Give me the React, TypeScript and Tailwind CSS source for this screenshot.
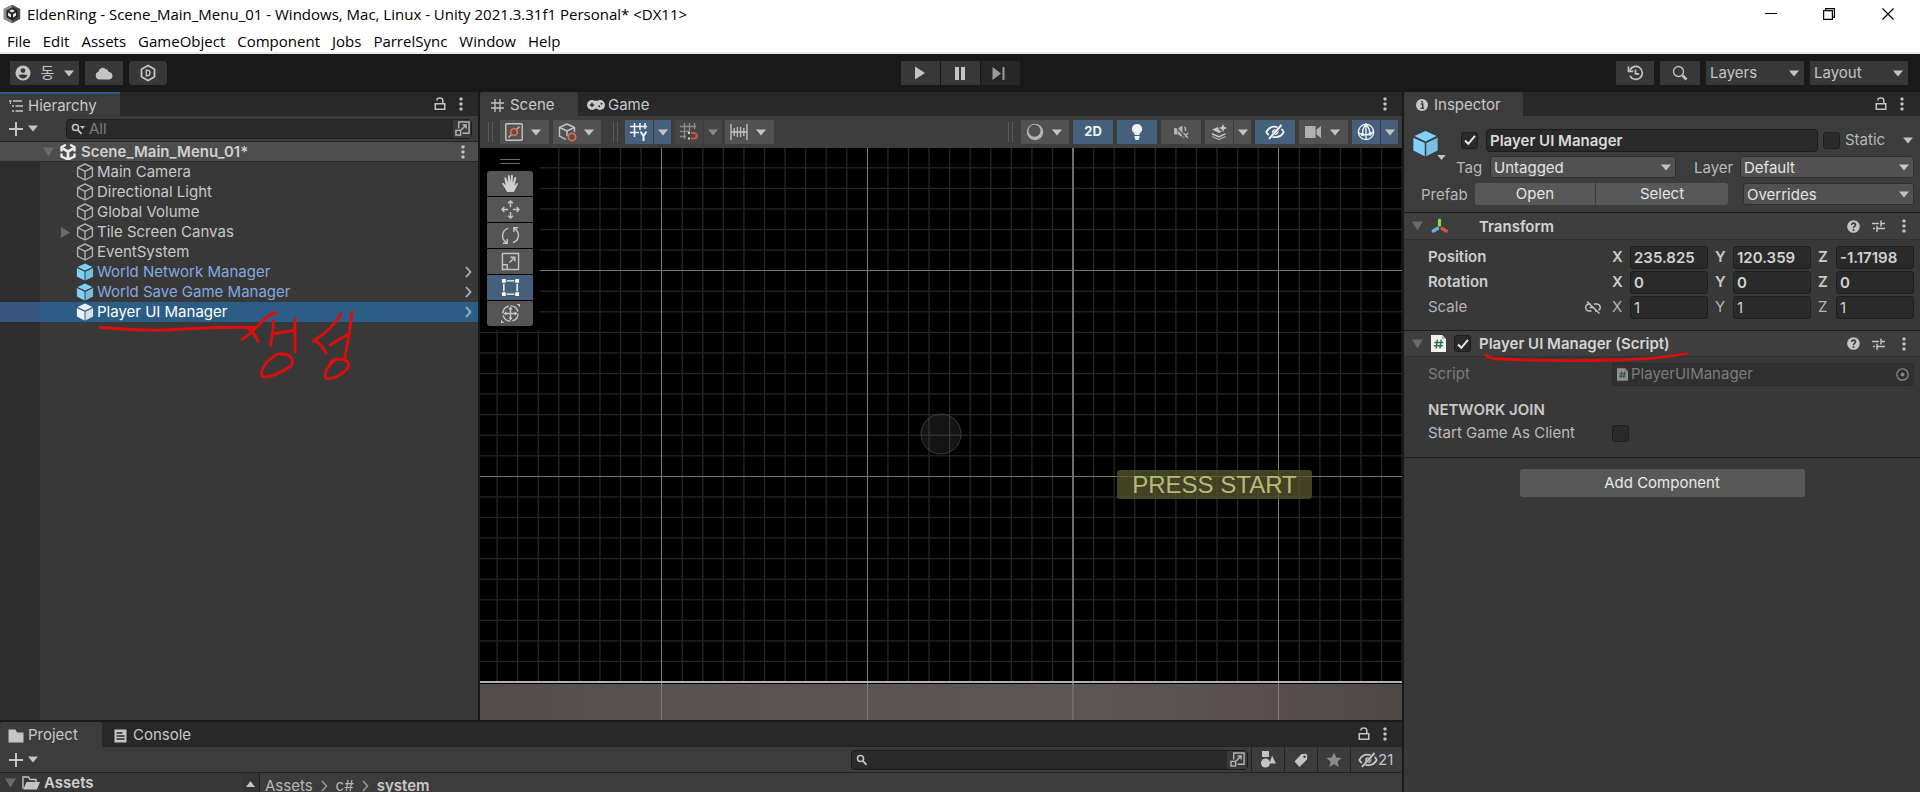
import React from "react";

type SvgProps = { className?: string };

/* ---------- small shared glyphs ---------- */

const Caret = ({ className = "text-[#c4c4c4]" }: SvgProps) => (
  <svg viewBox="0 0 10 7" className={`h-[7px] w-[10px] shrink-0 ${className}`} fill="currentColor" aria-hidden="true">
    <path d="M0 0.5h10L5 6.5z" />
  </svg>
);

const Foldout = ({ className = "text-[#6a6a6a]" }: SvgProps) => (
  <svg viewBox="0 0 11 10" className={`h-[10px] w-[11px] shrink-0 ${className}`} fill="currentColor" aria-hidden="true">
    <path d="M0 0.5h11L5.5 9.5z" />
  </svg>
);

const Dots = () => (
  <svg viewBox="0 0 4 14" className="h-[14px] w-1 shrink-0 text-[#c4c4c4]" fill="currentColor" aria-hidden="true">
    <rect x="0.5" y="0.5" width="3" height="3" rx="0.8" />
    <rect x="0.5" y="5.5" width="3" height="3" rx="0.8" />
    <rect x="0.5" y="10.5" width="3" height="3" rx="0.8" />
  </svg>
);

const Lock = () => (
  <svg viewBox="0 0 12 14" className="h-[14px] w-3 shrink-0 text-[#c4c4c4]" fill="none" stroke="currentColor" strokeWidth="1.5" aria-hidden="true">
    <rect x="1.25" y="6.75" width="9.5" height="5.5" />
    <path d="M3 3.5V2.8C3 1.6 4 1 5.8 1c2 0 3 .7 3 2.2v3.5" />
  </svg>
);

const Plus = () => (
  <svg viewBox="0 0 16 16" className="size-4 shrink-0 text-[#c4c4c4]" stroke="currentColor" strokeWidth="2" aria-hidden="true">
    <path d="M8 1v14M1 8h14" />
  </svg>
);

const Magnifier = ({ className = "size-[14px]" }: SvgProps) => (
  <svg viewBox="0 0 14 14" className={`shrink-0 text-[#c4c4c4] ${className}`} fill="none" stroke="currentColor" strokeWidth="1.6" aria-hidden="true">
    <circle cx="5.5" cy="5.5" r="3" />
    <path d="M7.8 7.8l3.700 4" strokeWidth="1.800" />
  </svg>
);

const Expand = ({ className = "size-[15px]" }: SvgProps) => (
  <svg viewBox="0 0 16 16" className={`shrink-0 text-[#b4b4b4] ${className}`} fill="none" stroke="currentColor" strokeWidth="1.5" aria-hidden="true">
    <path d="M4 8V1h11v12H8" />
    <rect x="1" y="10" width="5" height="5" />
    <path d="M6.5 9.5l5-5M8 4.2h3.8V8" />
  </svg>
);

const CubeOutline = () => (
  <svg viewBox="0 0 18 18" className="size-[18px] shrink-0 text-[#b0b0b0]" fill="none" stroke="currentColor" strokeWidth="1.4" strokeLinejoin="round" aria-hidden="true">
    <path d="M9 1l7.4 3.6v8.6L9 17l-7.4-3.8V4.6zM1.6 4.6L9 8.4l7.4-3.8M9 8.4V17" />
  </svg>
);

const CubeSolid = ({ className = "" }: SvgProps) => (
  <svg viewBox="0 0 18 18" className={`shrink-0 ${className}`} fill="currentColor" aria-hidden="true">
    <path d="M9 .6L16.4 4 9 7.6 1.6 4z" />
    <path d="M.9 5.1l7.6 3.6v8.8L.9 13.6z" />
    <path d="M17.1 5.1L9.5 8.7v8.8l7.6-3.9z" opacity=".88" />
  </svg>
);

const UnityLogo = () => (
  <svg viewBox="0 0 16 16" className="size-4 shrink-0" fill="none" aria-hidden="true">
    <path d="M5.8.8L1.5 3.2v4.2M10.2.8l4.3 2.4v4.2M1.500 9.500v3L8 15.500l6.500-3v-3" stroke="#ececec" strokeWidth="2.4" />
    <path d="M8 7.6V14M8 7.6L2.5 4.4M8 7.6l5.5-3.2" stroke="#ececec" strokeWidth="2.800" />
  </svg>
);

const ScriptIcon = ({ className = "" }: SvgProps) => (
  <svg viewBox="0 0 15 17" className={`shrink-0 ${className}`} aria-hidden="true">
    <path d="M0 0h11l4 4v13H0z" fill="#f2f2f2" />
    <path d="M11 0l4 4h-4z" fill="#b9b9b9" />
    <path d="M6.4 4.5l-1.3 9M10.3 4.5l-1.3 9M3.3 7.5h9M2.8 10.7h9" stroke="#2f7046" strokeWidth="1.4" fill="none" />
  </svg>
);

const EyeOff = ({ className = "" }: SvgProps) => (
  <svg viewBox="0 0 20 16" className={`h-4 w-5 shrink-0 ${className}`} fill="none" stroke="currentColor" strokeWidth="1.800" aria-hidden="true">
    <path d="M12.500 3.200C7 1.600 3.200 4.500 1.300 8c.6 1.200 1.500 2.300 2.700 3.100M16.500 4.800c1 .9 1.700 2 2.200 3.200-2 3.800-5.700 6-11.200 4.800" />
    <path d="M4 14.800L16.500 1" strokeWidth="2" />
    <path d="M7 9.500c-.6-2.300 1-4.500 3.800-4.300z" fill="currentColor" stroke="none" />
    <path d="M9.400 11l4-4.500c.6 2.300-1 4.700-4 4.500z" fill="currentColor" stroke="none" />
  </svg>
);

const Grip = () => (
  <span aria-hidden="true" className="h-5 w-[5px] shrink-0 border-x border-[#5a5a5a]" />
);

const PathChevron = () => (
  <svg viewBox="0 0 7 12" className="h-3 w-[7px]" fill="none" stroke="#999" strokeWidth="1.600" aria-hidden="true">
    <path d="M1 1l4.500 5L1 11" />
  </svg>
);

/* ---------- building blocks ---------- */

function CheckBox({ id, checked = false, label }: { id: string; checked?: boolean; label?: string }) {
  return (
    <span className="relative grid size-[17px] shrink-0 place-items-center">
      <input
        id={id}
        type="checkbox"
        defaultChecked={checked}
        aria-label={label}
        className="peer absolute inset-0 appearance-none rounded-[3px] border border-[#1e1e1e] bg-[#2a2a2a]"
      />
      <svg viewBox="0 0 14 12" className="pointer-events-none relative h-3 w-3.5 opacity-0 peer-checked:opacity-100" fill="none" stroke="#e8e8e8" strokeWidth="2" aria-hidden="true">
        <path d="M2 6.500l3.300 3.300L12 1.800" />
      </svg>
    </span>
  );
}

function DropDown({ id, value, className, selectClass }: { id: string; value: string; className: string; selectClass: string }) {
  return (
    <span className={`relative flex items-center ${className}`}>
      <select id={id} aria-label={value} className={`w-full appearance-none outline-none ${selectClass}`}>
        <option>{value}</option>
      </select>
      <span className="pointer-events-none absolute right-[5px]">
        <Caret />
      </span>
    </span>
  );
}

const topButton = "flex h-6 items-center justify-center bg-[#383838] text-[#c4c4c4]";

function TitleBar() {
  return (
    <header className="border-b-2 border-[#e9e9e9] bg-white font-['Open_Sans','Noto_Sans_CJK_KR',sans-serif] text-black">
      <div className="flex h-7 items-center">
        <svg viewBox="0 0 18 20" className="ml-[3px] h-5 w-[18px]" aria-hidden="true">
          <path d="M9 .8l8.200 4.300v9.800L9 19.200.8 14.900V5.100z" fill="#4a4a4a" />
          <path d="M9 .8L.8 5.100v9.800L9 19.200z" fill="#8e8e8e" />
          <path d="M9 3.600l5.600 3v6.700L9 16.400l-5.600-3.100V6.600z" fill="#262626" />
          <path d="M9 5.200l3 1.700-3 1.700-3-1.700zM5 8.600l3 1.700v3.200l-3-1.700zM13 8.600l-3 1.700v3.200l3-1.700z" fill="#e4e4e4" />
        </svg>
        <h1 className="ml-1.5 flex-1 text-[15px] whitespace-nowrap">
          EldenRing - Scene_Main_Menu_01 - Windows, Mac, Linux - Unity 2021.3.31f1 Personal* &lt;DX11&gt;
        </h1>
        <button aria-label="Minimize" className="grid h-7 w-[58px] place-items-center">
          <svg viewBox="0 0 12 12" className="size-3" stroke="#000"><path d="M0 5.500h12" /></svg>
        </button>
        <button aria-label="Restore" className="grid h-7 w-[58px] place-items-center">
          <svg viewBox="0 0 12 12" className="size-3" fill="none" stroke="#000" strokeWidth="1.200">
            <path d="M.6 2.600h8.800v8.800H.6zM2.600 2.600V.6h8.800v8.800h-2" />
          </svg>
        </button>
        <button aria-label="Close" className="mr-0.5 grid h-7 w-[60px] place-items-center">
          <svg viewBox="0 0 12 12" className="size-3" stroke="#000" strokeWidth="1.200"><path d="M.5.5l11 11M11.500.5l-11 11" /></svg>
        </button>
      </div>
      <nav className="flex h-6 items-start gap-3 pl-[7px] text-[15px]">
        {["File", "Edit", "Assets", "GameObject", "Component", "Jobs", "ParrelSync", "Window", "Help"].map((m) => (
          <button key={m} className="leading-[26px]">{m}</button>
        ))}
      </nav>
    </header>
  );
}

function MainToolbar() {
  return (
    <div className="grid h-[38px] grid-cols-[1fr_auto_1fr] items-center bg-[#191919]">
      <div className="flex items-center gap-1.5 pl-2.5">
        <button className={`${topButton} w-[69px] gap-2.5`}>
          <svg viewBox="0 0 16 16" className="size-4" aria-hidden="true">
            <circle cx="8" cy="8" r="7.500" fill="#c4c4c4" />
            <circle cx="8" cy="5.600" r="2.400" fill="#383838" />
            <path d="M3.600 10.200c2-1 6.800-1 8.800 0-.8 2.200-2.400 3.300-4.400 3.300s-3.600-1.100-4.400-3.300z" fill="#383838" />
          </svg>
          <span>동</span>
          <Caret />
        </button>
        <button aria-label="Cloud" className={`${topButton} w-[38px]`}>
          <svg viewBox="0 0 18 14" className="h-3.5 w-[18px]" fill="currentColor"><path d="M4.500 13.500a4 4 0 01-1-7.800A4.200 4.200 0 0111 3.300c1.400.2 2.500 1.200 2.700 2.800 2.200 0 3.800 1.600 3.800 3.700s-1.500 3.700-3.700 3.700z" /></svg>
        </button>
        <button aria-label="Version control" className={`${topButton} w-[38px] rounded-[3px]`}>
          <svg viewBox="0 0 16 18" className="h-[18px] w-4" fill="none" stroke="currentColor">
            <path d="M8 1.500l6.500 3.700v7.600L8 16.500l-6.500-3.700V5.200z" strokeWidth="1.800" />
            <path d="M6.300 6.200h1.200a2.500 2.800 0 010 5.600H6.300z" strokeWidth="1.400" />
          </svg>
        </button>
      </div>
      <div className="flex gap-px">
        <button aria-label="Play" className={`${topButton} w-[39px]`}>
          <svg viewBox="0 0 12 14" className="h-3.5 w-3" fill="currentColor"><path d="M1 .5L11 7 1 13.500z" /></svg>
        </button>
        <button aria-label="Pause" className={`${topButton} w-[39px]`}>
          <svg viewBox="0 0 10 13" className="h-[13px] w-2.5" fill="currentColor"><path d="M0 0h4v13H0zM6 0h4v13H6z" /></svg>
        </button>
        <button aria-label="Step" className="flex h-6 w-[39px] items-center justify-center bg-[#272727] pr-1 text-[#999]">
          <svg viewBox="0 0 13 13" className="size-[13px]" fill="currentColor"><path d="M.5 0l8.500 6.500L.5 13zM10.500 0h2v13h-2z" /></svg>
        </button>
      </div>
      <div className="flex items-center justify-end gap-1.5 pr-3">
        <button aria-label="Undo history" className={`${topButton} w-[38px]`}>
          <svg viewBox="0 0 17 16" className="h-4 w-[17px]" fill="none" stroke="currentColor" strokeWidth="1.700">
            <path d="M2.800 5.500A6.500 6.500 0 113 10.800" />
            <path d="M1.500 1.500v4.800h4.800" />
            <path d="M8.500 4.500v4.300h3.600" />
          </svg>
        </button>
        <button aria-label="Search" className={`${topButton} w-10`}>
          <svg viewBox="0 0 16 16" className="size-4" fill="none" stroke="currentColor">
            <circle cx="6.500" cy="6.500" r="5" strokeWidth="1.300" />
            <path d="M10.500 10.500l4 4" strokeWidth="2.600" />
          </svg>
        </button>
        <DropDown id="layers" value="Layers" className="w-[98px]" selectClass="h-6 bg-[#383838] pl-1 text-[#c4c4c4]" />
        <DropDown id="layout" value="Layout" className="w-[98px]" selectClass="h-6 bg-[#383838] pl-1 text-[#c4c4c4]" />
      </div>
    </div>
  );
}

const tree = [
  { name: "Main Camera", kind: "plain" },
  { name: "Directional Light", kind: "plain" },
  { name: "Global Volume", kind: "plain" },
  { name: "Tile Screen Canvas", kind: "plain", children: true },
  { name: "EventSystem", kind: "plain" },
  { name: "World Network Manager", kind: "prefab" },
  { name: "World Save Game Manager", kind: "prefab" },
  { name: "Player UI Manager", kind: "selected" },
];

function Hierarchy() {
  return (
    <section aria-label="Hierarchy" className="relative flex w-[478px] shrink-0 flex-col bg-[#383838]">
      <div className="flex h-6 items-stretch bg-[#282828]">
        <button className="flex w-[120px] items-center gap-[5px] border-t-2 border-[#2c5d87] bg-[#3c3c3c] pt-0.5 pl-[9px]">
          <svg viewBox="0 0 14 12" className="h-3 w-3.5" stroke="#c4c4c4" strokeWidth="1.500" aria-hidden="true">
            <path d="M0 1h2.500M4 1h9M3 6h2M6.500 6H14M3 11h2M6.500 11H14" />
            <path d="M1.500 1v3" strokeWidth="1" />
          </svg>
          Hierarchy
        </button>
        <div className="ml-auto flex items-center gap-[13px] pr-[15px]"><Lock /><Dots /></div>
      </div>
      <div className="flex h-[26px] items-center gap-1 border-b border-[#232323] bg-[#3c3c3c] pr-1.5 pl-2">
        <button aria-label="Create object" className="flex items-center gap-1"><Plus /><Caret /></button>
        <label className="ml-6 flex h-5 flex-1 items-center rounded-[4px] border border-[#1c1c1c] bg-[#2a2a2a] pl-[3px]">
          <Magnifier />
          <svg viewBox="0 0 5 3" className="-ml-1 mb-0.5 h-[3px] w-[5px]" fill="#c4c4c4" aria-hidden="true"><path d="M0 0h5L2.500 3z" /></svg>
          <input aria-label="Search hierarchy" placeholder="All" className="ml-1 min-w-0 flex-1 bg-transparent pt-0.5 text-[15px] outline-none placeholder:text-[#7c7c7c]" />
          <span className="grid h-full w-[18px] place-items-center bg-[#3a3a3a]"><Expand /></span>
        </label>
      </div>
      <div className="flex h-5 items-center border-b border-[#2b2b2b] bg-[#4d4d4d] pr-[13px] pl-[43px] font-semibold text-[#d0d0d0]">
        <Foldout />
        <span className="mr-[5px] ml-1.5"><UnityLogo /></span>
        <span className="flex-1 pt-0.5">Scene_Main_Menu_01*</span>
        <Dots />
      </div>
      <ul className="flex-1 bg-linear-to-r from-[#2d2d2d] from-[40px] to-[#383838] to-[40px]">
        {tree.map((n) => {
          const selected = n.kind === "selected";
          return (
            <li
              key={n.name}
              className={selected ? "bg-linear-to-r from-[#38557f] from-[40px] to-[#2c5d87] to-[40px]" : ""}
            >
              <button className="flex h-5 w-full items-center pr-1.5 pl-[61px]">
                <span className="w-[15px]">
                  {n.children && (
                    <svg viewBox="0 0 9 11" className="h-[11px] w-[9px]" fill="#6a6a6a" aria-hidden="true"><path d="M0 0l9 5.500L0 11z" /></svg>
                  )}
                </span>
                {n.kind === "plain" && <CubeOutline />}
                {n.kind === "prefab" && <CubeSolid className="size-[18px] text-[#7fd0f5]" />}
                {selected && <CubeSolid className="size-[18px] text-[#f0f2f5]" />}
                <span className={`ml-[3px] flex-1 text-left ${n.kind === "prefab" ? "text-[#85a8e0]" : selected ? "text-white" : "text-[#c8c8c8]"}`}>
                  {n.name}
                </span>
                {n.kind !== "plain" && (
                  <svg viewBox="0 0 7 12" className="h-3 w-[7px]" fill="none" stroke="#a8b4c0" strokeWidth="1.800" aria-hidden="true"><path d="M1 1l4.500 5L1 11" /></svg>
                )}
              </button>
            </li>
          );
        })}
      </ul>
      {/* pen marks laid over the list */}
      <svg viewBox="0 0 260 70" className="pointer-events-none absolute top-[218px] left-[95px] h-[70px] w-[260px]" fill="none" stroke="#e00c0c" strokeWidth="2.800" strokeLinecap="round" strokeLinejoin="round" aria-hidden="true">
        <path d="M5 17.500c26 2 52 3.500 76 2 25-1.500 52-3 78-2" />
        <path d="M181 2.500c-8 1.500-14 9-20 15-5 5.500-9 9-14 12M154 19c4 3 7 7 9 12.500" />
        <path d="M178 11c1 8-1 15-2.500 24M177 24l22-3.500M200 9v33" />
        <path d="M175 49c-6 5-10 13-8 17 5 3 18-3 29-10 4-7-1-12-9-12-6-.5-7 1-11 5" />
        <path d="M246 4c-7 12-16 20-28 27M219 30c5 3 9 7 12 13M235 35l17-10M257 2c-2 16-4 33-8 48" />
        <path d="M240 50c-7 5-12 14-9 18 6 2 16-3 21-9 4-6 0-10-8-10-6 0-8 2-9 5" />
      </svg>
    </section>
  );
}

const tool = "grid h-6 place-items-center bg-[#515151] text-[#c4c4c4]";
const toolOn = "grid h-6 place-items-center bg-[#46607c] text-[#eef3f8]";

function SceneToolbar() {
  return (
    <div className="flex h-8 items-center justify-between bg-[#3c3c3c] pr-1 pl-2">
      <div className="flex items-center">
        <Grip />
        <button aria-label="Pivot" className="ml-[7px] flex h-6 w-[49px] items-center justify-between bg-[#515151] pr-2 pl-[5px]">
          <svg viewBox="0 0 18 18" className="size-[18px]" fill="none" aria-hidden="true">
            <rect x=".8" y=".8" width="16.400" height="16.400" rx="1" stroke="#c4c4c4" strokeWidth="1.400" />
            <circle cx="9" cy="9" r="3.400" stroke="#e06a50" strokeWidth="1.800" />
            <path d="M3.500 14.500l2.500-2.500M12 6l2.500-2.500" stroke="#c4c4c4" strokeWidth="1.300" />
          </svg>
          <Caret />
        </button>
        <button aria-label="Handle orientation" className="ml-1 flex h-6 w-12 items-center justify-between bg-[#515151] pr-[7px] pl-[5px]">
          <svg viewBox="0 0 19 19" className="size-[19px]" fill="none" aria-hidden="true">
            <path d="M9 1l7.500 3.500V9M9 1L1.500 4.500v8.500L8 16.500M1.500 4.500L9 8l7.500-3.500M9 8v5" stroke="#c4c4c4" strokeWidth="1.400" />
            <circle cx="14" cy="14" r="3.700" stroke="#e06a50" strokeWidth="1.800" />
          </svg>
          <Caret />
        </button>
        <span className="ml-3 flex"><Grip /></span>
        <button aria-label="Grid axis" className={`${toolOn} ml-[7px] w-7`}>
          <svg viewBox="0 0 18 18" className="size-[18px]" fill="none" stroke="currentColor" aria-hidden="true">
            <path d="M4.500 0v14M10 0v7M15 0v6M0 3.500h17M0 9.500h9" strokeWidth="1.500" />
            <path d="M10.500 8.500l3 4.500 3-4.500M13.500 13v5" strokeWidth="2" />
          </svg>
        </button>
        <button aria-label="Grid options" className={`${toolOn} ml-px w-[17px]`}><Caret /></button>
        <button aria-label="Grid snapping" className="ml-1 grid h-6 w-7 place-items-center bg-[#454545] text-[#8a8a8a]">
          <svg viewBox="0 0 18 18" className="size-[18px]" fill="none" stroke="currentColor" aria-hidden="true">
            <path d="M4.500 0v16M9.500 0v8M14.500 0v6M0 3.500h16M0 8.500h10M0 13.500h6" strokeWidth="1.300" />
            <path d="M11 10h3a2.800 2.800 0 010 5.600h-3" stroke="#c25a46" strokeWidth="2" />
            <path d="M8 10h2M8 15.600h2" stroke="#d0d0d0" strokeWidth="2" />
          </svg>
        </button>
        <button aria-label="Snap options" className="ml-px grid h-6 w-[17px] place-items-center bg-[#454545]"><Caret className="text-[#8a8a8a]" /></button>
        <button aria-label="Increment snap" className="ml-1 flex h-6 w-[49px] items-center justify-between bg-[#515151] pr-2 pl-[5px]">
          <svg viewBox="0 0 18 16" className="h-4 w-[18px]" stroke="#c4c4c4" strokeWidth="1.300" aria-hidden="true">
            <path d="M1 0v16M17 0v16M4.200 4v8M7.400 3v10M10.600 3v10M13.800 4v8M1 8h16" />
          </svg>
          <Caret />
        </button>
      </div>
      <div className="flex items-center gap-1">
        <span className="mr-1 flex"><Grip /></span>
        <button aria-label="Draw mode" className="flex h-6 w-12 items-center justify-between bg-[#515151] pr-[7px] pl-[5px]">
          <svg viewBox="0 0 18 18" className="size-[18px]" aria-hidden="true">
            <circle cx="9" cy="9" r="8.200" fill="#b4b4b4" />
            <circle cx="8.500" cy="7.800" r="6" fill="#515151" />
          </svg>
          <Caret />
        </button>
        <button className={`${toolOn} w-10 text-[13px] font-bold`}>2D</button>
        <button aria-label="Scene lighting" className={`${toolOn} w-10`}>
          <svg viewBox="0 0 12 16" className="h-4 w-3" fill="currentColor"><path d="M6 0a5 5 0 013.300 8.800c-.8.800-.8 1.500-.8 2.200h-5c0-.7 0-1.400-.8-2.200A5 5 0 016 0zM3.500 12h5v1.500L7.500 16h-3l-1-2.500z" /></svg>
        </button>
        <button aria-label="Scene audio" className={`${tool} w-10`}>
          <svg viewBox="0 0 16 14" className="h-3.5 w-4" aria-hidden="true">
            <path d="M1 3h3.500v6.500H1zM5.200 3L9.500.5v11.500L5.200 9.800z" fill="#b4b4b4" />
            <path d="M10.500 8l4.500 5M15 8l-4.500 5M11.500 2c1 1 1.300 2.500.8 4" stroke="#b4b4b4" strokeWidth="1.500" fill="none" />
            <path d="M2 .5l10 12" stroke="#515151" strokeWidth="1.200" />
          </svg>
        </button>
        <div className="flex gap-px">
          <button aria-label="Scene effects" className={`${tool} w-7`}>
            <svg viewBox="0 0 17 16" className="h-4 w-[17px]" fill="currentColor">
              <path d="M1 5.500L7 3l1 3 3 1.500L8 9zM1 9l7 3 6.500-3v1.500L8 13.800 1 10.800zM1 12l7 3 6.500-3v1L8 16l-7-3z" />
              <path d="M12 0l1.200 2.800L16 4l-2.800 1.200L12 8l-1.200-2.800L8 4l2.800-1.200z" />
            </svg>
          </button>
          <button aria-label="Effects options" className={`${tool} w-[17px]`}><Caret /></button>
        </div>
        <button aria-label="Scene visibility" className={`${toolOn} w-10`}><EyeOff /></button>
        <button aria-label="Camera settings" className="flex h-6 w-[49px] items-center justify-between bg-[#515151] pr-2 pl-1.5">
          <svg viewBox="0 0 16 12" className="h-3 w-4" fill="#b0b0b0" aria-hidden="true"><path d="M0 0h10.500v12H0zM11.500 3.500L16 0v12l-4.500-3.500z" /></svg>
          <Caret />
        </button>
        <div className="flex gap-px">
          <button aria-label="Gizmos" className={`${toolOn} w-7`}>
            <svg viewBox="0 0 18 18" className="size-[18px]" fill="none" stroke="currentColor" strokeWidth="1.400" aria-hidden="true">
              <circle cx="9" cy="9" r="7.600" />
              <path d="M9 1.500C6 4.500 5.300 8 5.600 11.500c2.400.6 5 .4 7.400-.5 0-3.500-1.500-7-4-9.500zM1.500 9.500c1.200 1.200 2.500 1.700 4 2M13 11c1.500-.7 2.700-1.500 3.500-2.500M9 1.500V16" />
              <circle cx="9" cy="1.900" r="1.700" fill="currentColor" stroke="none" />
              <circle cx="5.600" cy="11.500" r="1.700" fill="currentColor" stroke="none" />
              <circle cx="13" cy="11" r="1.700" fill="currentColor" stroke="none" />
            </svg>
          </button>
          <button aria-label="Gizmo options" className={`${toolOn} w-[17px]`}><Caret /></button>
        </div>
      </div>
    </div>
  );
}

const paletteIcons: { name: string; art: React.ReactNode }[] = [
  {
    name: "View",
    art: (
      <path
        d="M6.500 19c-1-1.500-2-3.200-2.800-4.700L1.200 10.600c-.5-1 .8-1.700 1.600-.8L5 12 3.600 4.500c-.2-1.300 1.600-1.600 1.900-.3L7.200 9.300 7.300 2c0-1.300 1.900-1.300 1.900 0l.5 7 .9-7.300c.2-1.200 2-1 1.900.2L12.300 9.400l1.900-5.600c.4-1.200 2.100-.7 1.800.5l-1.800 8.200 2-2.500c.8-1 2.100-.2 1.500.9L14.500 17c-.4.900-.8 1.500-1.200 2z"
        fill="#d0d0d0"
        stroke="none"
      />
    ),
  },
  {
    name: "Move",
    art: <path d="M10 7.500V1M7.500 3.500L10 1l2.500 2.500M10 12.500V19M7.500 16.500L10 19l2.500-2.500M7.500 10H1M3.500 7.500L1 10l2.500 2.500M12.500 10H19M16.500 7.500L19 10l-2.500 2.500" />,
  },
  {
    name: "Rotate",
    art: <path d="M7.500 2.500A8 8 0 005.500 17M2 18.200h4.500v-4.500M12.500 17.500a8 8 0 002-14.500M18 1.800h-4.500v4.500" />,
  },
  {
    name: "Scale",
    art: <path d="M1.500 1.500h17v17h-17zM1.500 13.500h5v5M9 11l5.500-5.500M10 5.500h4.500V10" />,
  },
  {
    name: "Rect",
    art: (
      <>
        <path d="M6 3h8M6 17h8M3 6v8M17 6v8" stroke="#fff" />
        <path d="M1 1h4v4H1zM15 1h4v4h-4zM1 15h4v4H1zM15 15h4v4h-4z" fill="#fff" stroke="none" />
      </>
    ),
  },
  {
    name: "Transform",
    art: (
      <>
        <circle cx="10" cy="10" r="8" strokeDasharray="10.500 2" />
        <path d="M10 4v12M4 10h12M8.500 5.500L10 4l1.500 1.500M8.500 14.500L10 16l1.500-1.500M5.500 8.500L4 10l1.500 1.500M14.500 8.500L16 10l-1.500 1.500" />
        <path d="M16.500 0H20v3.500zM0 16.500V20h3.500z" fill="#c4c4c4" stroke="none" />
      </>
    ),
  },
];

const STEP = 20.57;
const range = (from: number, to: number) => Array.from({ length: to - from + 1 }, (_, i) => from + i);

function SceneGrid() {
  return (
    <svg className="absolute inset-0 size-full" aria-hidden="true">
      <defs>
        <linearGradient id="ground" x1="0" x2="1" y1="0" y2="0">
          <stop offset="0" stopColor="#504c47" />
          <stop offset=".12" stopColor="#58504b" />
          <stop offset=".35" stopColor="#5a554f" />
          <stop offset=".65" stopColor="#5b5750" />
          <stop offset=".85" stopColor="#594f4c" />
          <stop offset="1" stopColor="#4d4942" />
        </linearGradient>
      </defs>
      {range(-8, 60).filter((i) => i % 10 !== 0).map((i) => (
        <rect key={`v${i}`} x={181 + i * STEP} y="0" width="1.300" height="534" fill="#272727" />
      ))}
      {range(-5, 19).filter((i) => i % 10 !== 0).map((i) => (
        <rect key={`h${i}`} x="0" y={122 + i * STEP} width="100%" height="1.300" fill="#252525" />
      ))}
      <rect x="0" y="536" width="100%" height="100%" fill="url(#ground)" />
      {range(0, 5).map((i) => (
        <rect key={`m${i}`} x={Math.round(181 + i * 205.7)} y="0" width={i === 2 ? 2 : 1} height="100%" fill={i === 2 ? "#6d6d6d" : "#7d7d7d"} />
      ))}
      <rect x="0" y="122" width="100%" height="1" fill="#747474" />
      <rect x="0" y="328" width="100%" height="1" fill="#747474" />
      <rect x="0" y="533" width="100%" height="2" fill="#b4b1ae" />
      <circle cx="461" cy="286" r="20" fill="#ffffff" fillOpacity=".08" stroke="#3c3c3c" />
    </svg>
  );
}

function Scene() {
  return (
    <section aria-label="Scene" className="flex min-w-0 flex-1 flex-col">
      <div className="flex h-6 items-center bg-[#282828]">
        <button className="flex h-6 w-[98px] items-center gap-1.5 rounded-t-[3px] bg-[#3c3c3c] pt-0.5 pl-[11px]">
          <svg viewBox="0 0 13 13" className="size-[13px]" stroke="#c4c4c4" strokeWidth="1.300" aria-hidden="true"><path d="M4 0v13M9 0v13M0 4h13M0 9h13" /></svg>
          Scene
        </button>
        <button className="flex h-6 items-center gap-[3px] pt-0.5 pl-[9px]">
          <svg viewBox="0 0 18 10" className="h-2.5 w-[18px]" aria-hidden="true">
            <path d="M5 0c1.200 0 2 .8 4 .8S11.800 0 13 0a5 5 0 010 10c-2 0-2.500-1.500-4-1.500S7 10 5 10A5 5 0 015 0z" fill="#c8c8c8" />
            <path d="M5 2.800v4.400M2.800 5h4.400" stroke="#282828" strokeWidth="1.400" />
            <circle cx="12.200" cy="6.300" r="1" fill="#282828" />
            <circle cx="14.500" cy="3.800" r="1" fill="#282828" />
          </svg>
          Game
        </button>
        <span className="mr-[15px] ml-auto"><Dots /></span>
      </div>
      <SceneToolbar />
      <div className="relative flex-1 overflow-hidden bg-black">
        <SceneGrid />
        <div className="absolute top-0 left-0 flex h-[182px] w-[60px] flex-col items-center bg-black pt-[11px]">
          <span aria-hidden="true" className="mb-[7px] h-[5px] w-5 border-y border-[#6c6c6c]" />
          <div className="flex w-[46px] flex-col gap-px overflow-hidden rounded-[3px]">
            {paletteIcons.map((t) => (
              <button key={t.name} aria-label={t.name} className={`grid h-[25px] place-items-center ${t.name === "Rect" ? "bg-[#46607c]" : "bg-[#555555]"}`}>
                <svg viewBox="0 0 20 20" className="size-[19px]" fill="none" stroke="#c4c4c4" strokeWidth="1.500">{t.art}</svg>
              </button>
            ))}
          </div>
        </div>
        <button className="absolute top-[322px] left-[637px] h-[29px] w-[195px] rounded-[3px] bg-[#57582f]/75 font-['Liberation_Sans',sans-serif] text-[24px] leading-[29px] text-[#b7b97a]">
          PRESS START
        </button>
      </div>
    </section>
  );
}

function Project() {
  const filter = "grid h-full w-[33px] place-items-center border-l border-[#232323] text-[#c4c4c4]";
  return (
    <section aria-label="Project" className="mt-0.5 h-[70px] overflow-hidden bg-[#3c3c3c]">
      <div className="flex h-[25px] items-center border-b border-[#232323] bg-[#282828]">
        <button className="flex h-[25px] w-[102px] items-center gap-1 rounded-t-[3px] bg-[#3c3c3c] pt-[3px] pl-2">
          <svg viewBox="0 0 16 14" className="h-3.5 w-4" fill="#c4c4c4" aria-hidden="true"><path d="M.5.5h7l1.500 3h6.500v10H.5z" /></svg>
          Project
        </button>
        <button className="flex h-[25px] items-center gap-1.5 pt-[3px] pl-3">
          <svg viewBox="0 0 13 14" className="h-3.5 w-[13px]" aria-hidden="true">
            <path d="M.5.500h12v13H.5z" fill="#c4c4c4" />
            <path d="M2.500 4h6M2.500 7h8M2.500 10h8" stroke="#282828" strokeWidth="1.300" />
          </svg>
          Console
        </button>
        <div className="ml-auto flex items-center gap-[13px] pr-[15px]"><Lock /><Dots /></div>
      </div>
      <div className="flex h-[26px] items-center border-b border-[#232323] pl-2">
        <button aria-label="Create asset" className="flex items-center gap-1"><Plus /><Caret /></button>
        <label className="mr-[3px] ml-auto flex h-5 w-[397px] items-center rounded-[4px] border border-[#1c1c1c] bg-[#2a2a2a] pl-[3px]">
          <Magnifier />
          <input aria-label="Search project" className="min-w-0 flex-1 bg-transparent outline-none" />
          <span className="grid h-full w-5 place-items-center bg-[#3a3a3a]"><Expand /></span>
        </label>
        <button aria-label="Search by type" className={filter}>
          <svg viewBox="0 0 16 18" className="h-[18px] w-4" fill="currentColor"><path d="M2 0h7v6H2zM9.500 12.500L12 4.500l4 8z" /><circle cx="5.500" cy="12" r="4.500" /></svg>
        </button>
        <button aria-label="Search by label" className={filter}>
          <svg viewBox="0 0 14 14" className="size-3.5" fill="currentColor" fillRule="evenodd"><path d="M7.500 1L12 .8l1.300 1.200-.3 4.500L5.500 14 .5 8.500zM10.500 2.500a1.200 1.200 0 100 2.400 1.200 1.200 0 000-2.400z" /></svg>
        </button>
        <button aria-label="Favorites" className={filter}>
          <svg viewBox="0 0 16 16" className="size-4" fill="#8a8a8a"><path d="M8 .5l2.200 5 5.300.5-4 3.600 1.200 5.400L8 12.200 3.300 15l1.200-5.400-4-3.600 5.300-.5z" /></svg>
        </button>
        <button aria-label="Hidden packages" className="flex h-full w-[52px] items-center border-l border-[#232323] pl-[7px] text-[#c4c4c4]">
          <EyeOff className="w-5" />
          <span className="pt-0.5">21</span>
        </button>
      </div>
      <div className="flex">
        <div className="flex h-[22px] w-[242px] items-start bg-[#383838] pl-[5px] font-semibold text-[#d0d0d0]">
          <span className="mt-[5px] flex"><Foldout /></span>
          <svg viewBox="0 0 18 14" className="mt-[3px] ml-[6px] h-3.5 w-[18px]" aria-hidden="true">
            <path d="M1 12.500V1h5.500l1.500 2.500h6V6" fill="none" stroke="#c4c4c4" strokeWidth="1.400" />
            <path d="M4.500 6H18l-3 7.500H1.200z" fill="#c4c4c4" />
          </svg>
          <span className="ml-1 pt-0.5 leading-4">Assets</span>
        </div>
        <div className="flex h-[22px] w-[18px] justify-center border-r border-[#232323] bg-[#343434] pt-2">
          <svg viewBox="0 0 9 6" className="h-1.5 w-[9px]" fill="#c4c4c4" aria-hidden="true"><path d="M0 6h9L4.500 0z" /></svg>
        </div>
        <nav aria-label="Folder path" className="flex h-[19px] items-end gap-2 pl-[5px] leading-[13px] text-[#b8b8b8]">
          <a href="#assets">Assets</a>
          <PathChevron />
          <a href="#cs">c#</a>
          <PathChevron />
          <a href="#system" className="font-semibold text-[#c8c8c8]">system</a>
        </nav>
      </div>
    </section>
  );
}

function HeaderTools() {
  return (
    <span className="flex items-center gap-3">
      <svg viewBox="0 0 14 14" className="size-[13px]" aria-hidden="true">
        <circle cx="7" cy="7" r="6.800" fill="#c4c4c4" />
        <path d="M4.900 5.400c0-2.700 4.200-2.600 4.200-.1 0 1.500-2.100 1.500-2.100 3.200" fill="none" stroke="#3c3c3c" strokeWidth="1.700" />
        <circle cx="7" cy="10.700" r="1.100" fill="#3c3c3c" />
      </svg>
      <svg viewBox="0 0 14 12" className="mr-1 h-3 w-3.5" stroke="#c4c4c4" strokeWidth="1.500" aria-hidden="true">
        <path d="M0 3.500h7M9 3.500h4M9 .5v6M1 8.500h2M5 8.500h8M5 5.800v6" />
      </svg>
      <Dots />
    </span>
  );
}

const vectors = [
  { name: "Position", values: ["235.825", "120.359", "-1.17198"], bold: true },
  { name: "Rotation", values: ["0", "0", "0"], bold: true },
  { name: "Scale", values: ["1", "1", "1"], bold: false },
];

function Inspector() {
  const button = "h-[22px] bg-[#585858] text-[#e4e4e4]";
  const drop = "h-[22px] rounded-[3px] border border-[#303030] bg-[#515151] pl-[3px] text-[#e4e4e4]";
  return (
    <aside aria-label="Inspector" className="flex w-[516px] shrink-0 flex-col bg-[#383838]">
      <div className="flex h-6 items-center bg-[#282828]">
        <button className="flex h-6 w-[119px] items-center gap-1.5 rounded-t-[3px] bg-[#3c3c3c] pt-0.5 pl-3">
          <svg viewBox="0 0 13 13" className="size-3" aria-hidden="true">
            <circle cx="6.500" cy="6.500" r="6.500" fill="#c8c8c8" />
            <path d="M5 5.300h2.300v4.500M4.800 10h4" stroke="#3c3c3c" strokeWidth="1.600" fill="none" />
            <circle cx="6.600" cy="3" r="1.100" fill="#3c3c3c" />
          </svg>
          Inspector
        </button>
        <div className="ml-auto flex items-center gap-[13px] pr-4"><Lock /><Dots /></div>
      </div>

      <div className="flex h-[97px] flex-col gap-[3px] border-b border-[#1c1c1c] bg-[#3c3c3c] pt-3 pr-1.5">
        <div className="flex h-6 items-center pl-2">
          <button aria-label="Object icon" className="relative h-6 w-[35px]">
            <CubeSolid className="absolute top-0.5 size-[27px] text-[#7fd3fa]" />
            <span className="absolute top-[27px] left-[25px]"><svg viewBox="0 0 10 6" className="h-[5px] w-[9px]" fill="#c4c4c4"><path d="M0 0h10L5 6z" /></svg></span>
          </button>
          <span className="ml-3.5"><CheckBox id="active" checked label="Active" /></span>
          <input
            aria-label="Name"
            defaultValue="Player UI Manager"
            className="ml-2 h-[23px] min-w-0 flex-1 rounded-[4px] border border-[#1c1c1c] bg-[#2a2a2a] pl-[3px] font-semibold text-[#dadada] outline-none"
          />
          <span className="ml-[5px] flex"><CheckBox id="static" /></span>
          <label htmlFor="static" className="ml-[5px] w-[58px] text-[#b8b8b8]">Static</label>
          <span className="mr-px"><Caret /></span>
        </div>
        <div className="flex h-6 items-center pl-[52px]">
          <label htmlFor="tag" className="w-[34px] pt-0.5 text-[#b8b8b8]">Tag</label>
          <DropDown id="tag" value="Untagged" className="w-[186px]" selectClass={drop} />
          <label htmlFor="layer" className="ml-auto w-[46px] pt-0.5 text-[#b8b8b8]">Layer</label>
          <DropDown id="layer" value="Default" className="w-[174px]" selectClass={drop} />
        </div>
        <div className="flex h-6 items-center pl-[17px]">
          <span className="w-[54px] pt-0.5 text-[#b8b8b8]">Prefab</span>
          <button className={`${button} w-[120px] rounded-l-[3px]`}>Open</button>
          <button className={`${button} ml-px w-[132px] rounded-r-[3px]`}>Select</button>
          <span className="ml-auto"><DropDown id="overrides" value="Overrides" className="w-[171px]" selectClass={drop} /></span>
        </div>
      </div>

      <div className="flex h-[27px] items-center border-b border-[#303030] bg-[#3e3e3e] pr-3.5 pl-2">
        <Foldout />
        <svg viewBox="0 0 18 16" className="ml-2 h-4 w-[18px]" strokeLinecap="round" strokeWidth="3.200" aria-hidden="true">
          <path d="M8.500 2.200v5" stroke="#8fd64f" />
          <path d="M6.500 10.500L2.200 13" stroke="#5fb8f0" />
          <path d="M11 10.500l4.300 2.500" stroke="#e0563a" />
        </svg>
        <h2 className="ml-[30px] flex-1 pt-0.5 font-semibold text-[#d4d4d4]">Transform</h2>
        <HeaderTools />
      </div>
      <div className="flex h-[90px] flex-col gap-0.5 pt-1.5 pr-1.5 pl-6">
        {vectors.map((v) => (
          <div key={v.name} className={`flex h-[23px] items-center ${v.bold ? "font-semibold text-[#cccccc]" : "text-[#b4b4b4]"}`}>
            <span className="flex-1">{v.name}</span>
            {!v.bold && (
              <svg viewBox="0 0 16 14" className="mr-[11px] h-3.5 w-4" fill="none" stroke="#c4c4c4" strokeWidth="1.500" aria-hidden="true">
                <path d="M5.500 3H4.200a3.300 3.300 0 000 7h2.300M9 3h2.500a3.400 3.400 0 012.200 6.200M4.500 6.500h4M10 10h1.500M2 .5l12.500 12" />
              </svg>
            )}
            {v.values.map((value, i) => (
              <label key={i} className={`flex items-center ${i === 0 ? "" : "ml-[7px]"}`}>
                <span className="w-[18px]">{"XYZ"[i]}</span>
                <input defaultValue={value} className="h-[23px] w-[78px] rounded-[3px] border border-[#1e1e1e] bg-[#2a2a2a] pl-[3px] text-[#d2d2d2] outline-none" />
              </label>
            ))}
          </div>
        ))}
      </div>

      <div className="relative flex h-[27px] items-center border-t border-b border-t-[#1c1c1c] border-b-[#303030] bg-[#3e3e3e] pr-3.5 pl-2">
        <Foldout />
        <ScriptIcon className="ml-2 h-[17px] w-[15px]" />
        <span className="ml-2 flex"><CheckBox id="script-enabled" checked label="Script enabled" /></span>
        <h2 className="ml-2 flex-1 pt-0.5 font-semibold text-[#d4d4d4]">Player UI Manager (Script)</h2>
        <HeaderTools />
        <svg viewBox="0 0 208 12" className="pointer-events-none absolute top-[20px] left-[79px] h-3 w-[208px]" fill="none" stroke="#e00c0c" strokeWidth="2.800" strokeLinecap="round" aria-hidden="true">
          <path d="M2.500 4c3 3 8 4 17 4 30 1.500 70 2 110 1 25-.5 50-1.500 74-6.500" />
        </svg>
      </div>
      <div className="border-b border-[#1c1c1c] pt-1.5 pr-1.5 pb-3 pl-6">
        <div className="flex h-[23px] items-center text-[#7d7d7d]">
          <span className="flex-1">Script</span>
          <button className="flex h-[23px] w-[302px] items-center gap-[3px] rounded-[3px] border border-[#2b2b2b] bg-[#303030] px-1">
            <ScriptIcon className="h-[13px] w-[11px] opacity-50" />
            <span className="flex-1 text-left">PlayerUIManager</span>
            <svg viewBox="0 0 13 13" className="size-[13px]" fill="none" stroke="#8a8a8a" aria-hidden="true"><circle cx="6.500" cy="6.500" r="5.700" strokeWidth="1.200" /><circle cx="6.500" cy="6.500" r="1.500" fill="#8a8a8a" /></svg>
          </button>
        </div>
        <h3 className="mt-3 leading-6 font-semibold text-[#c8c8c8]">NETWORK JOIN</h3>
        <div className="flex h-[23px] items-center">
          <label htmlFor="as-client" className="w-[184px] text-[#bcbcbc]">Start Game As Client</label>
          <CheckBox id="as-client" />
        </div>
      </div>
      <button className="mx-auto mt-[11px] h-7 w-[285px] rounded-[3px] bg-[#585858] text-[#eaeaea]">Add Component</button>
    </aside>
  );
}

export default function App() {
  return (
    <div className="flex h-screen flex-col overflow-hidden bg-[#191919] font-['Inter','Noto_Sans_CJK_KR',sans-serif] text-[15px] text-[#c8c8c8]">
      <TitleBar />
      <MainToolbar />
      <main className="flex min-h-0 flex-1 gap-0.5">
        <div className="flex min-w-0 flex-1 flex-col">
          <div className="flex min-h-0 flex-1 gap-0.5">
            <Hierarchy />
            <Scene />
          </div>
          <Project />
        </div>
        <Inspector />
      </main>
    </div>
  );
}
